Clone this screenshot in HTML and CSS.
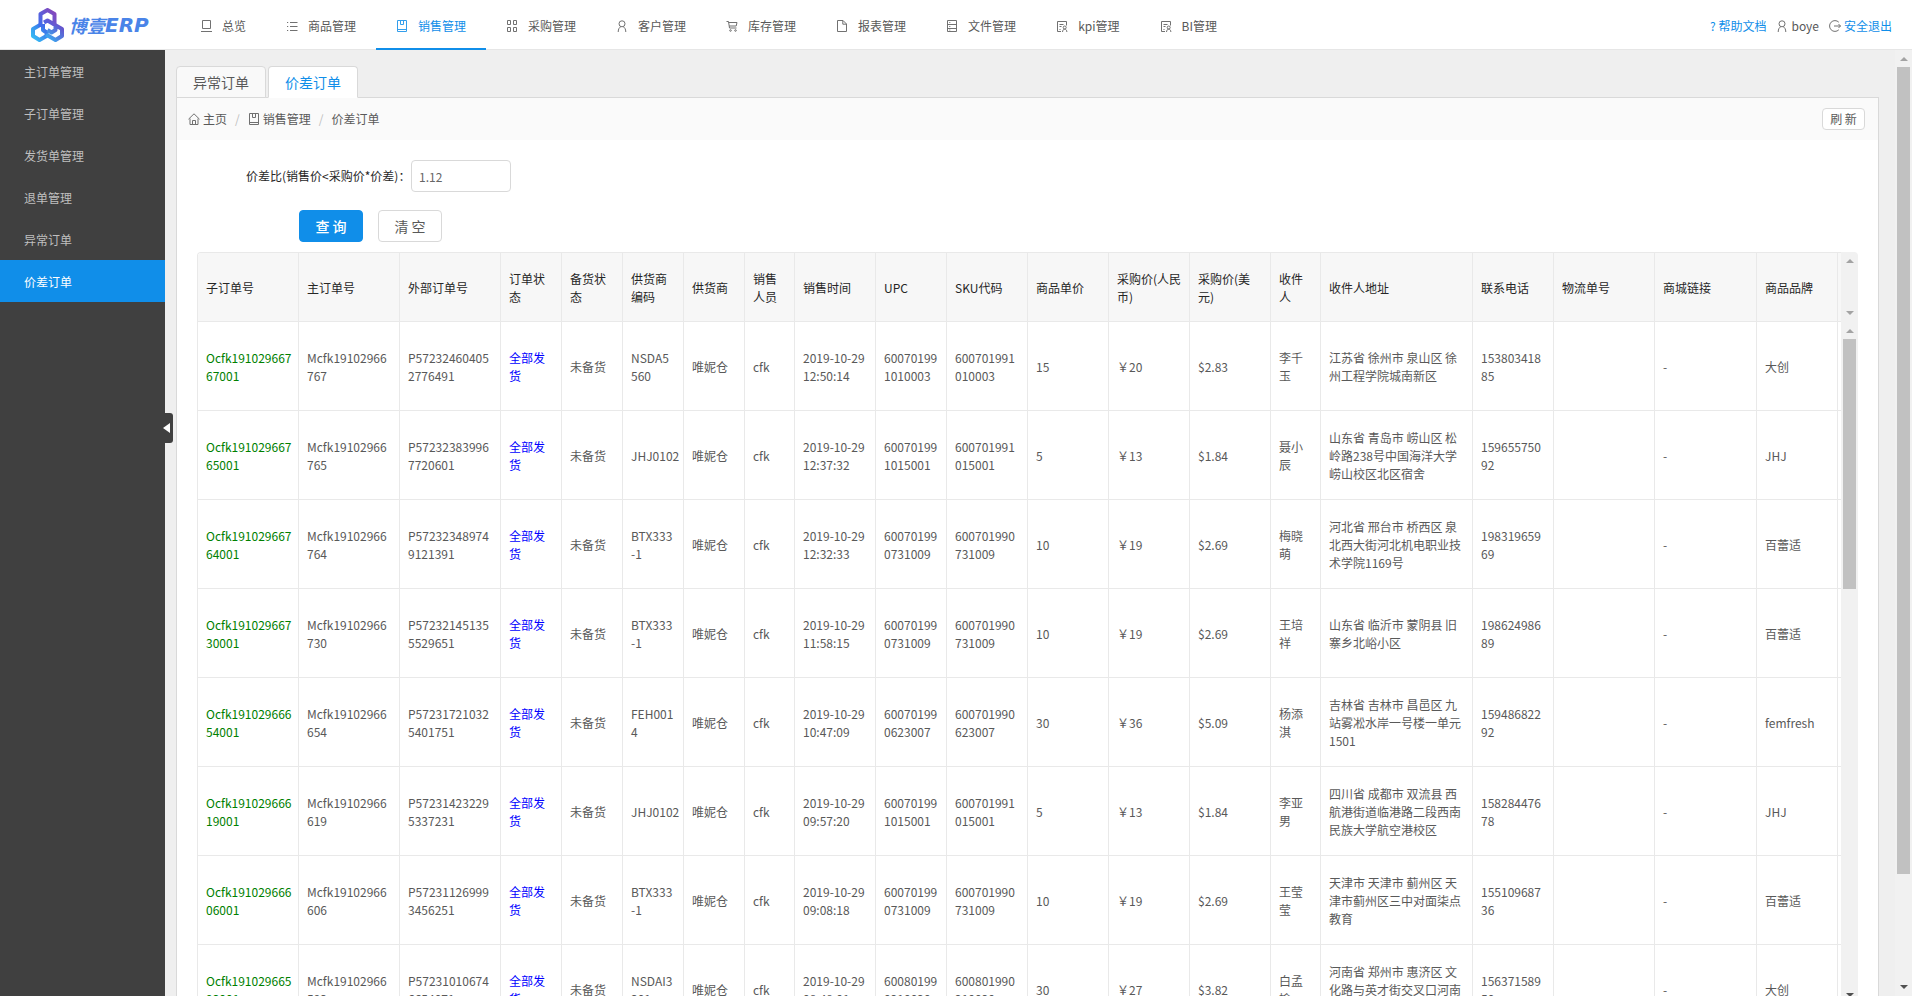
FILE: index.html
```html
<!DOCTYPE html>
<html lang="zh-CN">
<head>
<meta charset="utf-8">
<title>博壹ERP - 价差订单</title>
<link rel="stylesheet" href="styles.css">
</head>
<body>
<svg class="sprite" aria-hidden="true">
  <symbol id="i-laptop" viewBox="0 0 12 12"><path d="M2.500.5h8v8h-8zM1 11.500h11"/></symbol>
  <symbol id="i-list" viewBox="0 0 12 12"><path d="M4 2.500h7.500M4 6.500h7.500M4 10.500h7.500M1 2.500h1.200M1 6.500h1.200M1 10.500h1.200"/></symbol>
  <symbol id="i-book" viewBox="0 0 12 12"><path d="M1.500.5h9v11h-9zM1.500 9.500h9M4.500.5v4h3v-4"/></symbol>
  <symbol id="i-grid" viewBox="0 0 12 12"><path d="M1.500.5h3v4h-3zM7.500.5h3v4h-3zM1.500 7.500h3v4h-3zM7.500 7.500h3v4h-3z"/></symbol>
  <symbol id="i-user" viewBox="0 0 12 12"><circle cx="6" cy="3.800" r="3"/><path d="M2.200 12c0-3 1.200-4.600 2.600-5.300M9.800 12c0-3-1.200-4.600-2.600-5.300"/></symbol>
  <symbol id="i-cart" viewBox="0 0 12 12"><path d="M.5 1.500h2l1 6.500h7M2.500 2.500h8.500l-.8 3.500H3.200"/><circle cx="4.500" cy="10.500" r=".8"/><circle cx="9.500" cy="10.500" r=".8"/></symbol>
  <symbol id="i-file" viewBox="0 0 12 12"><path d="M1.500.5h5.500l3.500 3.500v7.500h-9zM6.800.5v3.700h3.700"/></symbol>
  <symbol id="i-database" viewBox="0 0 12 12"><path d="M1.500.5h9v11h-9zM1.500 4.500h9M1.500 8.500h9M3.300 2.500h1M3.300 6.500h1M3.300 10h1"/></symbol>
  <symbol id="i-solution" viewBox="0 0 12 12"><path d="M5 11.500H1.500v-10h9v4M3.500 4.500h4M3.500 6.500h2M3.500 9.500h1"/><circle cx="8.700" cy="7.500" r="1.500"/><path d="M6.500 12c.2-2 1-2.800 2.200-2.800s2 .8 2.200 2.800"/></symbol>
  <symbol id="i-home" viewBox="0 0 12 12"><path d="M.5 6.200 6 .8l5.500 5.400M2 5.500v6h8v-6M4.500 11.500v-4h3v4"/></symbol>
  <symbol id="i-logout" viewBox="0 0 12 12"><path d="M9.800 2.200a5.400 5.400 0 1 0 0 7.600M5 6h6.500M9.500 4l2 2-2 2"/></symbol>
</svg>

<header class="header">
  <a class="logo" href="#">
    <svg class="logo-mark" viewBox="0 0 33 34" aria-hidden="true">
      <defs>
        <linearGradient id="g1" x1="0" y1="1" x2="1" y2="0"><stop offset="0" stop-color="#3d6ff0"/><stop offset="1" stop-color="#8a45b8"/></linearGradient>
        <linearGradient id="g2" x1="0" y1="1" x2="1" y2="0"><stop offset="0" stop-color="#35c0f5"/><stop offset="1" stop-color="#3f5fe6"/></linearGradient>
        <linearGradient id="g3" x1="0" y1="1" x2="1" y2="0"><stop offset="0" stop-color="#35b4f5"/><stop offset="1" stop-color="#6a48c8"/></linearGradient>
      </defs>
      <g fill="none" stroke-width="4" stroke-linejoin="round">
        <path stroke="url(#g2)" d="M9 17 2 21v7l6.500 4 7-4v-3.500L12 22v-6"/>
        <path stroke="url(#g3)" d="M24 17l7 4v7l-6.500 4-9.500-5.500M24.500 16v6l-4 2.500-4-2.500"/>
        <path stroke="url(#g1)" d="M9.500 19V6l7-4 7 4v12M13 14.500l3.500-2 6 3.500"/>
      </g>
    </svg>
    <span class="logo-text">博壹<span class="logo-latin">ERP</span></span>
  </a>
  <nav class="nav">
    <a href="#"><svg class="icon"><use href="#i-laptop"/></svg>总览</a>
    <a href="#"><svg class="icon"><use href="#i-list"/></svg>商品管理</a>
    <a href="#" class="active"><svg class="icon"><use href="#i-book"/></svg>销售管理</a>
    <a href="#"><svg class="icon"><use href="#i-grid"/></svg>采购管理</a>
    <a href="#"><svg class="icon"><use href="#i-user"/></svg>客户管理</a>
    <a href="#"><svg class="icon"><use href="#i-cart"/></svg>库存管理</a>
    <a href="#"><svg class="icon"><use href="#i-file"/></svg>报表管理</a>
    <a href="#"><svg class="icon"><use href="#i-database"/></svg>文件管理</a>
    <a href="#"><svg class="icon"><use href="#i-solution"/></svg>kpi管理</a>
    <a href="#"><svg class="icon"><use href="#i-solution"/></svg>BI管理</a>
  </nav>
  <div class="account">
    <a href="#">? 帮助文档</a>
    <span class="user"><svg class="icon"><use href="#i-user"/></svg>boye</span>
    <span class="user"><svg class="icon"><use href="#i-logout"/></svg><a href="#">安全退出</a></span>
  </div>
</header>

<div class="body">
  <aside class="sidebar">
    <a href="#">主订单管理</a>
    <a href="#">子订单管理</a>
    <a href="#">发货单管理</a>
    <a href="#">退单管理</a>
    <a href="#">异常订单</a>
    <a href="#" class="active">价差订单</a>
    <button class="collapse" type="button" aria-label="收起菜单"></button>
  </aside>

  <main class="content">
    <div class="tabs">
      <button type="button" class="tab">异常订单</button>
      <button type="button" class="tab active">价差订单</button>
    </div>
    <section class="panel">
      <div class="crumbbar">
        <nav class="crumbs">
          <a href="#"><svg class="icon"><use href="#i-home"/></svg>主页</a><span class="sep">/</span>
          <a href="#"><svg class="icon"><use href="#i-book"/></svg>销售管理</a><span class="sep">/</span>
          <span>价差订单</span>
        </nav>
        <button type="button" class="btn small">刷 新</button>
      </div>
      <form class="filter">
        <div class="field">
          <label for="ratio">价差比(销售价&lt;采购价*价差)：</label>
          <input id="ratio" type="text" value="1.12">
        </div>
        <div class="actions">
          <button type="button" class="btn primary">查 询</button>
          <button type="button" class="btn">清 空</button>
        </div>
      </form>

      <div class="grid">
        <div class="grid-view">
          <table>
            <colgroup>
              <col class="w101"><col class="w101"><col class="w101"><col class="w61"><col class="w61"><col class="w61"><col class="w61"><col class="w50"><col class="w81"><col class="w71"><col class="w81"><col class="w81"><col class="w81"><col class="w81"><col class="w50"><col class="w152"><col class="w81"><col class="w101"><col class="w102"><col class="w81"><col>
            </colgroup>
            <thead>
              <tr><th>子订单号</th><th>主订单号</th><th>外部订单号</th><th>订单状<br>态</th><th>备货状<br>态</th><th>供货商<br>编码</th><th>供货商</th><th>销售<br>人员</th><th>销售时间</th><th>UPC</th><th>SKU代码</th><th>商品单价</th><th>采购价(人民<br>币)</th><th>采购价(美<br>元)</th><th>收件<br>人</th><th>收件人地址</th><th>联系电话</th><th>物流单号</th><th>商城链接</th><th>商品品牌</th><th></th></tr>
            </thead>
            <tbody>
              <tr><td class="sub">Ocfk191029667<br>67001</td><td>Mcfk19102966<br>767</td><td>P57232460405<br>2776491</td><td class="state">全部发<br>货</td><td>未备货</td><td>NSDA5<br>560</td><td>唯妮仓</td><td>cfk</td><td>2019-10-29<br>12:50:14</td><td>60070199<br>1010003</td><td>600701991<br>010003</td><td>15</td><td>￥20</td><td>$2.83</td><td>李千<br>玉</td><td>江苏省 徐州市 泉山区 徐<br>州工程学院城南新区</td><td>153803418<br>85</td><td></td><td>-</td><td>大创</td><td></td></tr>
              <tr><td class="sub">Ocfk191029667<br>65001</td><td>Mcfk19102966<br>765</td><td>P57232383996<br>7720601</td><td class="state">全部发<br>货</td><td>未备货</td><td>JHJ0102</td><td>唯妮仓</td><td>cfk</td><td>2019-10-29<br>12:37:32</td><td>60070199<br>1015001</td><td>600701991<br>015001</td><td>5</td><td>￥13</td><td>$1.84</td><td>聂小<br>辰</td><td>山东省 青岛市 崂山区 松<br>岭路238号中国海洋大学<br>崂山校区北区宿舍</td><td>159655750<br>92</td><td></td><td>-</td><td>JHJ</td><td></td></tr>
              <tr><td class="sub">Ocfk191029667<br>64001</td><td>Mcfk19102966<br>764</td><td>P57232348974<br>9121391</td><td class="state">全部发<br>货</td><td>未备货</td><td>BTX333<br>-1</td><td>唯妮仓</td><td>cfk</td><td>2019-10-29<br>12:32:33</td><td>60070199<br>0731009</td><td>600701990<br>731009</td><td>10</td><td>￥19</td><td>$2.69</td><td>梅晓<br>萌</td><td>河北省 邢台市 桥西区 泉<br>北西大街河北机电职业技<br>术学院1169号</td><td>198319659<br>69</td><td></td><td>-</td><td>百蕾适</td><td></td></tr>
              <tr><td class="sub">Ocfk191029667<br>30001</td><td>Mcfk19102966<br>730</td><td>P57232145135<br>5529651</td><td class="state">全部发<br>货</td><td>未备货</td><td>BTX333<br>-1</td><td>唯妮仓</td><td>cfk</td><td>2019-10-29<br>11:58:15</td><td>60070199<br>0731009</td><td>600701990<br>731009</td><td>10</td><td>￥19</td><td>$2.69</td><td>王培<br>祥</td><td>山东省 临沂市 蒙阴县 旧<br>寨乡北峪小区</td><td>198624986<br>89</td><td></td><td>-</td><td>百蕾适</td><td></td></tr>
              <tr><td class="sub">Ocfk191029666<br>54001</td><td>Mcfk19102966<br>654</td><td>P57231721032<br>5401751</td><td class="state">全部发<br>货</td><td>未备货</td><td>FEH001<br>4</td><td>唯妮仓</td><td>cfk</td><td>2019-10-29<br>10:47:09</td><td>60070199<br>0623007</td><td>600701990<br>623007</td><td>30</td><td>￥36</td><td>$5.09</td><td>杨添<br>淇</td><td>吉林省 吉林市 昌邑区 九<br>站雾凇水岸一号楼一单元<br>1501</td><td>159486822<br>92</td><td></td><td>-</td><td>femfresh</td><td></td></tr>
              <tr><td class="sub">Ocfk191029666<br>19001</td><td>Mcfk19102966<br>619</td><td>P57231423229<br>5337231</td><td class="state">全部发<br>货</td><td>未备货</td><td>JHJ0102</td><td>唯妮仓</td><td>cfk</td><td>2019-10-29<br>09:57:20</td><td>60070199<br>1015001</td><td>600701991<br>015001</td><td>5</td><td>￥13</td><td>$1.84</td><td>李亚<br>男</td><td>四川省 成都市 双流县 西<br>航港街道临港路二段西南<br>民族大学航空港校区</td><td>158284476<br>78</td><td></td><td>-</td><td>JHJ</td><td></td></tr>
              <tr><td class="sub">Ocfk191029666<br>06001</td><td>Mcfk19102966<br>606</td><td>P57231126999<br>3456251</td><td class="state">全部发<br>货</td><td>未备货</td><td>BTX333<br>-1</td><td>唯妮仓</td><td>cfk</td><td>2019-10-29<br>09:08:18</td><td>60070199<br>0731009</td><td>600701990<br>731009</td><td>10</td><td>￥19</td><td>$2.69</td><td>王莹<br>莹</td><td>天津市 天津市 蓟州区 天<br>津市蓟州区三中对面柒点<br>教育</td><td>155109687<br>36</td><td></td><td>-</td><td>百蕾适</td><td></td></tr>
              <tr><td class="sub">Ocfk191029665<br>93001</td><td>Mcfk19102966<br>593</td><td>P57231010674<br>6654071</td><td class="state">全部发<br>货</td><td>未备货</td><td>NSDAI3<br>301</td><td>唯妮仓</td><td>cfk</td><td>2019-10-29<br>08:48:01</td><td>60080199<br>0210020</td><td>600801990<br>210020</td><td>30</td><td>￥27</td><td>$3.82</td><td>白孟<br>榆</td><td>河南省 郑州市 惠济区 文<br>化路与英才街交叉口河南<br>省郑州市</td><td>156371589<br>50</td><td></td><td>-</td><td>大创</td><td></td></tr>
            </tbody>
          </table>
        </div>
        <div class="grid-side">
          <div class="track head-track"><i class="up"></i><i class="down"></i></div>
          <div class="track body-track"><i class="up"></i><span class="thumb"></span><i class="down dark"></i></div>
        </div>
      </div>
    </section>
  </main>
  <div class="track page-track"><i class="up"></i><span class="thumb"></span><i class="down dark"></i></div>
</div>
</body>
</html>
```

FILE: styles.css
```css
* { box-sizing: border-box; }
body {
  margin: 0;
  height: 100vh;
  overflow: hidden;
  display: flex;
  flex-direction: column;
  background: #efefef;
  color: #595959;
  font: 12px/18px "Noto Sans CJK SC", sans-serif;
}
a { color: inherit; text-decoration: none; }
button, input { font-family: inherit; color: inherit; }
.sprite { display: none; }
.icon {
  flex: none;
  width: 12px;
  height: 12px;
  fill: none;
  stroke: currentColor;
  stroke-width: 1;
  opacity: 0.85;
}

/* header */
.header {
  flex: none;
  display: flex;
  height: 50px;
  background: #fff;
  border-bottom: 1px solid #e6e6e6;
}
.logo {
  flex: none;
  width: 180px;
  padding: 1px 0 0 31px;
  display: flex;
  align-items: center;
  gap: 5px;
}
.logo-mark { width: 33px; height: 34px; }
.logo-text {
  display: flex;
  align-items: center;
  color: #4a84e8;
  font-size: 18px;
  font-style: italic;
  font-weight: 700;
}
.logo-latin { font-family: "DejaVu Sans", sans-serif; font-size: 20px; }
.nav { display: flex; flex: 1; }
.nav a {
  display: flex;
  align-items: center;
  gap: 10px;
  height: 50px;
  padding: 3px 20px 0;
  border-bottom: 2px solid transparent;
  white-space: nowrap;
}
.nav a.active { color: #108ee9; border-color: #108ee9; }
.account {
  display: flex;
  align-items: center;
  gap: 10px;
  padding: 2px 20px 0 0;
  white-space: nowrap;
}
.account a { color: #108ee9; }
.user { display: flex; align-items: center; gap: 3px; }

/* frame */
.body { flex: 1; min-height: 0; display: flex; }
.sidebar {
  position: relative;
  flex: none;
  width: 165px;
  background: #404040;
  color: #bfbfbf;
}
.sidebar a { display: block; height: 42px; padding: 1px 0 0 24px; line-height: 42px; }
.sidebar a.active { background: #108ee9; color: #fff; }
.collapse {
  position: absolute;
  left: 100%;
  top: 363px;
  width: 8px;
  height: 30px;
  padding: 0;
  border: 0;
  border-radius: 0 3px 3px 0;
  background: #404040;
}
.collapse::before {
  content: "";
  position: absolute;
  left: -2px;
  top: 10px;
  border: 5px solid transparent;
  border-left-width: 0;
  border-right: 7px solid #fff;
}
.content {
  flex: 1;
  min-width: 0;
  padding: 16px 16px 0 11px;
  display: flex;
  flex-direction: column;
}
.tabs { display: flex; gap: 2px; height: 31px; flex: none; }
.tab {
  width: 90px;
  height: 32px;
  padding: 0;
  border: 1px solid #d9d9d9;
  border-radius: 4px 4px 0 0;
  background: #f9f9f9;
  font-size: 14px;
  z-index: 0;
}
.tab.active { z-index: 1; background: #fff; border-bottom-color: #fff; color: #108ee9; }
.panel {
  flex: none;
  background: #fff;
  border: 1px solid #d9d9d9;
}
.crumbbar {
  display: flex;
  justify-content: space-between;
  align-items: center;
  height: 42px;
  padding: 0 13px 0 11px;
  background: #fafafa;
}
.crumbs { display: flex; align-items: center; }
.crumbs a { display: flex; align-items: center; gap: 3px; }
.sep { padding: 0 8px; color: #bfbfbf; }

/* controls */
.btn {
  width: 64px;
  height: 32px;
  padding: 0;
  border: 1px solid #d9d9d9;
  border-radius: 4px;
  background: #fff;
  font-size: 14px;
  line-height: 20px;
}
.btn.primary { background: #108ee9; border-color: #108ee9; color: #fff; font-weight: 500; }
.btn.small { width: 43px; height: 22px; font-size: 12px; }
.filter { padding: 20px 0 10px 69px; }
.field { display: flex; align-items: center; color: #262626; }
.field label { width: 165px; white-space: nowrap; }
.field input {
  width: 100px;
  height: 32px;
  padding: 0 7px;
  border: 1px solid #d9d9d9;
  border-radius: 4px;
  color: #666;
  font-size: 12px;
}
.actions { display: flex; gap: 15px; padding: 18px 0 0 53px; }

/* order table */
.grid { display: flex; padding: 0 20px; }
.grid-view {
  flex: 1;
  min-width: 0;
  height: 752px;
  overflow: hidden;
  border: 1px solid #e9e9e9;
  border-width: 1px 0 0 1px;
  border-radius: 4px 0 0 0;
}
table {
  width: 100%;
  table-layout: fixed;
  border-collapse: separate;
  border-spacing: 0;
}
.w50 { width: 50px; }
.w61 { width: 61px; }
.w71 { width: 71px; }
.w81 { width: 81px; }
.w101 { width: 101px; }
.w102 { width: 102px; }
.w152 { width: 152px; }
th, td {
  padding: 1px 0 0 8px;
  border: 1px solid #e9e9e9;
  border-width: 0 1px 1px 0;
  text-align: left;
  vertical-align: middle;
  white-space: nowrap;
}
th { height: 69px; background: #f7f7f7; color: #262626; font-weight: 400; }
td { height: 89px; }
th:last-child, td:last-child { padding: 0; border-right: 0; }
.sub { color: #008000; }
.state { color: #00f; }

/* scroll tracks */
.track {
  display: flex;
  flex-direction: column;
  align-items: center;
  padding: 7px 0;
  background: #f1f1f1;
}
.up, .down {
  flex: none;
  width: 0;
  height: 0;
  border: 4px solid transparent;
  border-top-width: 0;
  border-bottom-color: #a3a3a3;
}
.down {
  margin-top: auto;
  border-top: 4px solid #a3a3a3;
  border-bottom-width: 0;
}
.down.dark { border-top-color: #505050; }
.thumb { width: 13px; margin-top: 6px; background: #c1c1c1; }
.grid-side { flex: none; width: 17px; }
.head-track { height: 70px; border-radius: 0 4px 0 0; }
.body-track { height: 682px; }
.body-track .thumb { height: 250px; }
.page-track { flex: none; width: 17px; }
.page-track .thumb { height: calc(100% - 125px); }
```
